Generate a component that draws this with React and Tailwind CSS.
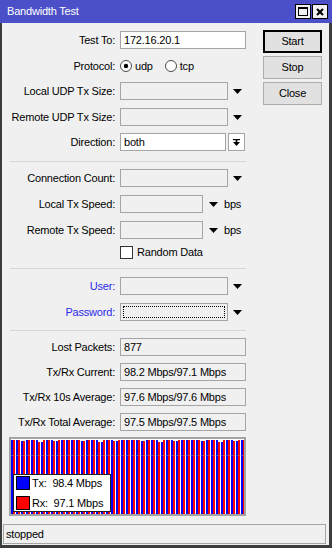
import React from "react";

const Arrow = () => (
  <svg width="9" height="5" viewBox="0 0 9 5">
    <path d="M0 0H9L4.5 5Z" fill="#000" />
  </svg>
);

const Label = ({ children, blue }) => (
  <div className={`w-[113px] shrink-0 text-right whitespace-nowrap ${blue ? "text-[#2b2be8]" : "text-black"}`}>
    {children}
  </div>
);

const Box = ({ w, white, children, focus }) => (
  <div
    className={`relative ml-[5px] h-[18px] shrink-0 border border-[#a5a5a5] px-[3px] leading-[16px] whitespace-nowrap ${w} ${
      white ? "bg-white" : "bg-[#f0f0f0]"
    }`}
  >
    {children}
    {focus && <div className="absolute inset-[2px] border border-dotted border-black" />}
  </div>
);

const Row = ({ label, blue, className = "", children }) => (
  <div className={`flex h-[18px] items-center ${className}`}>
    <Label blue={blue}>{label}</Label>
    {children}
  </div>
);

const Sep = ({ className }) => <div className={`ml-[8px] h-px w-[236px] bg-[#d7d7d7] ${className}`} />;

const Radio = ({ checked }) => (
  <svg width="12" height="12" viewBox="0 0 12 12">
    <circle cx="6" cy="6" r="5.5" fill="#fff" stroke="#4a4a4a" />
    {checked && <circle cx="6" cy="6" r="2.2" fill="#000" />}
  </svg>
);

const bars = Array.from({ length: 48 }, (_, i) => {
  const tx = [0, 0, 1, 0, 0, 0, 2, 0, 0, 1, 0, 0][i % 12];
  const rx = [0, 1, 0, 0, 0, 0, 0, 1, 0, 0, 2, 0][(i + 5) % 12];
  return { tx, rx };
});

const Chart = () => (
  <div className="relative ml-[7px] mt-[6px] h-[79px] w-[237px] overflow-hidden border-2 border-[#a3a3a3] bg-white">
    <div className="flex h-full items-end gap-[1px] pt-[1px]">
      {bars.map((b, i) => (
        <div key={i} className="flex h-full shrink-0 items-end">
          <div className="w-[2px] bg-[#0000ff]" style={{ height: `calc(100% - ${b.tx}px)` }} />
          <div className="w-[2px] bg-[#ff0000]" style={{ height: `calc(100% - ${b.rx}px)` }} />
        </div>
      ))}
    </div>
    <div className="absolute left-0 right-0 top-[16px] h-px bg-[#9a9a9a]/40" />
    <div className="absolute left-[2px] top-[35px] flex h-[38px] w-[98px] flex-col justify-center gap-[3px] border border-[#222] bg-white pl-[2px] text-[11px] tracking-[-0.2px]">
      <div className="flex items-center gap-[2px]">
        <div className="h-[14px] w-[14px] border border-black bg-[#0000ff]" />
        <span className="whitespace-pre">Tx:  98.4 Mbps</span>
      </div>
      <div className="flex items-center gap-[2px]">
        <div className="h-[14px] w-[14px] border border-black bg-[#ff0000]" />
        <span className="whitespace-pre">Rx:  97.1 Mbps</span>
      </div>
    </div>
  </div>
);

const Btn = ({ children, primary }) => (
  <button
    className={`h-[23px] w-[59px] bg-[#e1e1e1] text-[11px] leading-none ${
      primary ? "border-2 border-black" : "border border-[#adadad]"
    }`}
  >
    {children}
  </button>
);

export default function App() {
  return (
    <div className="flex h-[548px] w-[332px] flex-col bg-[#f0f0f0] font-['Liberation_Sans',Arial,sans-serif] text-[11px] tracking-[-0.2px] text-black">
      {/* title bar */}
      <div className="flex h-[23px] shrink-0 items-center bg-[#4c50c8] pl-[7px] pr-[4px]">
        <span className="text-white">Bandwidth Test</span>
        <div className="ml-auto flex gap-[1px]">
          <div className="flex h-[15px] w-[16px] items-center justify-center border border-black bg-[#f0f0f0]">
            <div className="h-[9px] w-[10px] border border-t-2 border-black" />
          </div>
          <div className="flex h-[15px] w-[16px] items-center justify-center border border-black bg-[#f0f0f0]">
            <svg width="8" height="8" viewBox="0 0 8 8">
              <path d="M1 1L7 7M7 1L1 7" stroke="#000" strokeWidth="2" />
            </svg>
          </div>
        </div>
      </div>

      <div className="flex flex-1 flex-col border-b-[3px] border-l-2 border-r-[3px] border-[#3c3c3c]">
        <div className="flex pt-[7px]">
          {/* form */}
          <div className="mt-[1px] flex w-[244px] shrink-0 flex-col">
            <Row label="Test To:">
              <Box w="w-[126px]" white>172.16.20.1</Box>
            </Row>
            <Row label="Protocol:" className="mt-[8px]">
              <div className="ml-[5px] flex items-center gap-[3px]">
                <Radio checked />
                <span>udp</span>
              </div>
              <div className="ml-[12px] flex items-center gap-[3px]">
                <Radio />
                <span>tcp</span>
              </div>
            </Row>
            <Row label="Local UDP Tx Size:" className="mt-[7px]">
              <Box w="w-[108px]" />
              <div className="ml-[5px] flex">
                <Arrow />
              </div>
            </Row>
            <Row label="Remote UDP Tx Size:" className="mt-[8px]">
              <Box w="w-[108px]" />
              <div className="ml-[5px] flex">
                <Arrow />
              </div>
            </Row>
            <Row label="Direction:" className="mt-[7px]">
              <Box w="w-[106px]" white>both</Box>
              <div className="ml-[2px] flex h-[18px] w-[17px] items-center justify-center border border-[#a5a5a5] bg-white">
                <svg width="7" height="7" viewBox="0 0 7 7">
                  <rect x="0" y="0" width="7" height="1.2" fill="#000" />
                  <rect x="2.7" y="1" width="1.6" height="2" fill="#000" />
                  <path d="M0 3H7L3.5 7Z" fill="#000" />
                </svg>
              </div>
            </Row>

            <Sep className="mt-[10px]" />

            <Row label="Connection Count:" className="mt-[7px]">
              <Box w="w-[108px]" />
              <div className="ml-[5px] flex">
                <Arrow />
              </div>
            </Row>
            <Row label="Local Tx Speed:" className="mt-[8px]">
              <Box w="w-[83px]" />
              <div className="ml-[6px] flex">
                <Arrow />
              </div>
              <span className="ml-[6px]">bps</span>
            </Row>
            <Row label="Remote Tx Speed:" className="mt-[8px]">
              <Box w="w-[83px]" />
              <div className="ml-[6px] flex">
                <Arrow />
              </div>
              <span className="ml-[6px]">bps</span>
            </Row>
            <div className="mt-[7px] flex h-[13px] items-center">
              <div className="ml-[118px] h-[13px] w-[13px] border border-[#333] bg-white" />
              <span className="ml-[4px]">Random Data</span>
            </div>

            <Sep className="mt-[9px]" />

            <Row label="User:" blue className="mt-[8px]">
              <Box w="w-[108px]" />
              <div className="ml-[5px] flex">
                <Arrow />
              </div>
            </Row>
            <Row label="Password:" blue className="mt-[8px]">
              <Box w="w-[108px]" focus />
              <div className="ml-[5px] flex">
                <Arrow />
              </div>
            </Row>

            <Sep className="mt-[9px]" />

            <Row label="Lost Packets:" className="mt-[7px]">
              <Box w="w-[126px]">877</Box>
            </Row>
            <Row label="Tx/Rx Current:" className="mt-[7px]">
              <Box w="w-[126px]">98.2 Mbps/97.1 Mbps</Box>
            </Row>
            <Row label="Tx/Rx 10s Average:" className="mt-[7px]">
              <Box w="w-[126px]">97.6 Mbps/97.6 Mbps</Box>
            </Row>
            <Row label="Tx/Rx Total Average:" className="mt-[7px]">
              <Box w="w-[126px]">97.5 Mbps/97.5 Mbps</Box>
            </Row>
          </div>

          {/* buttons */}
          <div className="ml-[17px] flex flex-col gap-[3px]">
            <Btn primary>Start</Btn>
            <Btn>Stop</Btn>
            <Btn>Close</Btn>
          </div>
        </div>

        <Chart />

        <div className="mb-[1px] ml-[1px] mr-[3px] mt-auto flex h-[20px] items-center border border-[#a5a5a5] pl-[2px]">
          stopped
        </div>
      </div>
    </div>
  );
}
